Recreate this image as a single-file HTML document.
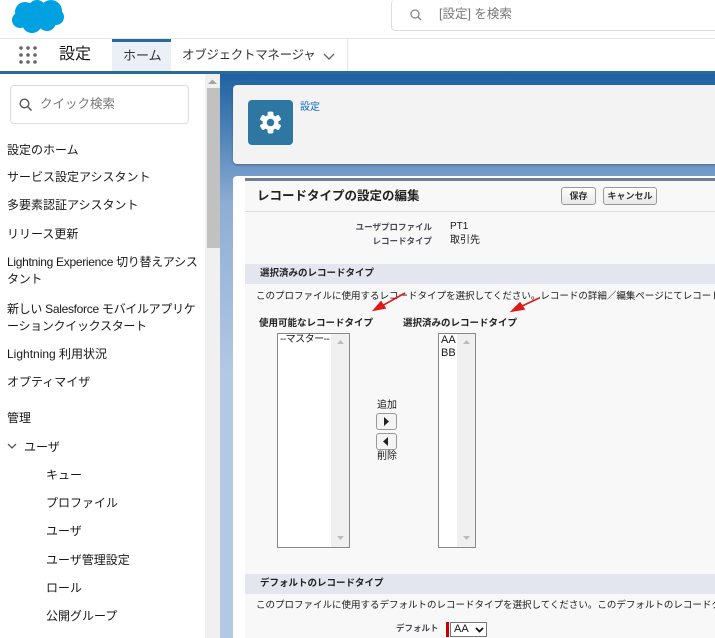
<!DOCTYPE html>
<html><head><meta charset="utf-8"><style>
*{margin:0;padding:0;box-sizing:border-box}
html,body{width:715px;height:638px;overflow:hidden}
body{position:relative;font-family:"Liberation Sans","Noto Sans CJK JP",sans-serif;color:#181818;background:#fff;line-height:1.2}
.a{position:absolute;white-space:nowrap}
.side{position:absolute;left:0;top:74px;width:205px;height:564px;overflow:hidden}
.side div{position:absolute;left:7px;font-size:12px;line-height:17px;color:#181818}
.sm{font-size:10px}
.b{font-weight:bold}
.st{font-size:9.5px;font-weight:bold;color:#222}
</style></head><body>
<!-- header -->
<svg class="a" style="left:10px;top:0" width="56" height="34" viewBox="0 0 56 34"><g fill="#00a1e0"><circle cx="15" cy="12" r="10"/><circle cx="27" cy="9" r="9"/><circle cx="41" cy="11" r="11"/><circle cx="10" cy="20" r="8"/><circle cx="22" cy="23" r="10"/><circle cx="37" cy="22" r="9"/><circle cx="46" cy="17" r="8"/></g></svg>
<div class="a" style="left:391px;top:0;width:330px;height:31px;border:1px solid #ddd;border-radius:4px;border-top:none"></div>
<svg class="a" style="left:410px;top:9px" width="12" height="12" viewBox="0 0 12 12"><circle cx="5" cy="5" r="4" fill="none" stroke="#888" stroke-width="1.3"/><path d="M8 8l3 3" stroke="#888" stroke-width="1.4"/></svg>
<div class="a" style="left:439px;top:8px;font-size:12.5px;line-height:1;color:#777">[設定] を検索</div>
<div class="a" style="left:0;top:38px;width:715px;height:1px;background:#e5e5e5"></div>
<svg class="a" style="left:19px;top:46px" width="18" height="18"><g fill="#666"><circle cx="2" cy="2" r="1.8"/><circle cx="9" cy="2" r="1.8"/><circle cx="16" cy="2" r="1.8"/><circle cx="2" cy="9" r="1.8"/><circle cx="9" cy="9" r="1.8"/><circle cx="16" cy="9" r="1.8"/><circle cx="2" cy="16" r="1.8"/><circle cx="9" cy="16" r="1.8"/><circle cx="16" cy="16" r="1.8"/></g></svg>
<div class="a" style="left:59px;top:47px;font-size:16px;line-height:1">設定</div>
<div class="a" style="left:112px;top:39px;width:59px;height:33px;background:#eaf0f5;border-top:3px solid #2a6a9b"></div>
<div class="a" style="left:123px;top:49px;font-size:13px;line-height:1;color:#333">ホーム</div>
<div class="a" style="left:182px;top:49px;font-size:12.5px;line-height:1;color:#333;letter-spacing:-0.3px">オブジェクトマネージャ</div>
<svg class="a" style="left:323px;top:53px" width="12" height="8"><path d="M1 1l5 5l5 -5" fill="none" stroke="#666" stroke-width="1.4"/></svg>
<div class="a" style="left:347px;top:39px;width:1px;height:33px;background:#e5e5e5"></div>
<div class="a" style="left:0;top:71px;width:715px;height:3px;background:#2a6a9b"></div>
<!-- sidebar -->
<div class="side">
<div style="left:10px;top:11px;width:179px;height:39px;border:1px solid #ddd;border-radius:4px"></div>
<svg style="position:absolute;left:19px;top:24px" width="13" height="13"><circle cx="5.5" cy="5.5" r="4.3" fill="none" stroke="#555" stroke-width="1.4"/><path d="M9 9l3.5 3.5" stroke="#555" stroke-width="1.5"/></svg>
<div style="left:40px;top:22px;color:#777;font-size:12.5px">クイック検索</div>
<div style="top:68px">設定のホーム</div>
<div style="top:95px">サービス設定アシスタント</div>
<div style="top:123px">多要素認証アシスタント</div>
<div style="top:152px">リリース更新</div>
<div style="top:180px;letter-spacing:-0.3px">Lightning Experience 切り替えアシス<br>タント</div>
<div style="top:227px;letter-spacing:-0.3px">新しい Salesforce モバイルアプリケ<br>ーションクイックスタート</div>
<div style="top:272px">Lightning 利用状況</div>
<div style="top:300px">オプティマイザ</div>
<div style="top:336px">管理</div>
<div style="left:24px;top:365px">ユーザ</div>
<div style="left:46px;top:393px">キュー</div>
<div style="left:46px;top:421px">プロファイル</div>
<div style="left:46px;top:449px">ユーザ</div>
<div style="left:46px;top:478px">ユーザ管理設定</div>
<div style="left:46px;top:506px">ロール</div>
<div style="left:46px;top:534px">公開グループ</div>
</div>
<svg class="a" style="left:7px;top:443px" width="10" height="8"><path d="M1 1l4 4l4 -4" fill="none" stroke="#555" stroke-width="1.3"/></svg>
<div class="a" style="left:205px;top:74px;width:15px;height:564px;background:#f0f0f0"></div>
<div class="a" style="left:207px;top:88px;width:13px;height:160px;background:#c1c1c1"></div>
<svg class="a" style="left:208px;top:79px" width="9" height="6"><path d="M0 5l4.5 -4.5l4.5 4.5z" fill="#a3a3a3"/></svg>
<!-- main bg -->
<div class="a" style="left:220px;top:74px;width:495px;height:564px;background:linear-gradient(#1f62a2 0px,#4f83b8 60px,#8fadd3 130px,#b2c8e3 300px)"></div>
<div class="a" style="left:233px;top:85px;width:490px;height:79px;background:#f3f3f3;border-radius:4px;box-shadow:0 1px 2px rgba(0,0,0,.3)"></div>
<div class="a" style="left:248px;top:100px;width:45px;height:45px;background:#2e77a3;border-radius:4px"></div>
<svg class="a" style="left:258px;top:110px" width="25" height="25" viewBox="-12 -12 24 24"><g fill="#fff"><circle r="7.5"/><rect x="-2.8" y="-10.5" width="5.6" height="5" rx="1.5"/><rect x="-2.8" y="-10.5" width="5.6" height="5" rx="1.5" transform="rotate(60)"/><rect x="-2.8" y="-10.5" width="5.6" height="5" rx="1.5" transform="rotate(120)"/><rect x="-2.8" y="-10.5" width="5.6" height="5" rx="1.5" transform="rotate(180)"/><rect x="-2.8" y="-10.5" width="5.6" height="5" rx="1.5" transform="rotate(240)"/><rect x="-2.8" y="-10.5" width="5.6" height="5" rx="1.5" transform="rotate(300)"/></g><circle r="3.6" fill="#2e77a3"/></svg>
<div class="a" style="left:300px;top:103px;font-size:10px;line-height:1;color:#0b6bc8">設定</div>
<div class="a" style="left:233px;top:176px;width:490px;height:470px;background:#fff;border-radius:4px"></div>
<div class="a" style="left:245px;top:178px;width:480px;height:470px;background:#f8f8f8;border-top:3px solid #747c95"></div>
<div class="a b" style="left:257px;top:190px;font-size:12.5px;line-height:1;color:#222">レコードタイプの設定の編集</div>
<div class="a b" style="left:561px;top:187px;width:35px;height:18px;border:1px solid #999;border-radius:3px;background:linear-gradient(#fff,#e8e8e8);text-align:center;line-height:16px;color:#333;font-size:9px">保存</div>
<div class="a b" style="left:603px;top:187px;width:54px;height:18px;border:1px solid #999;border-radius:3px;background:linear-gradient(#fff,#e8e8e8);text-align:center;line-height:16px;color:#333;font-size:9px">キャンセル</div>
<div class="a" style="left:245px;top:211px;width:480px;height:1px;background:#dbdbdb"></div>
<div class="a b" style="left:300px;top:223px;width:132px;text-align:right;font-size:8.5px;line-height:1;color:#4a4a56">ユーザプロファイル</div>
<div class="a sm" style="left:450px;top:222px;line-height:1">PT1</div>
<div class="a b" style="left:300px;top:237px;width:132px;text-align:right;font-size:8.5px;line-height:1;color:#4a4a56">レコードタイプ</div>
<div class="a sm" style="left:450px;top:236px;line-height:1">取引先</div>
<div class="a" style="left:245px;top:264px;width:480px;height:20px;background:#e3e6ee"></div>
<div class="a st" style="left:260px;top:269px;line-height:1">選択済みのレコードタイプ</div>
<div class="a" style="left:256px;top:292px;font-size:9.5px;line-height:1">このプロファイルに使用するレコードタイプを選択してください。レコードの詳細／編集ページにてレコードタイプ項目を表示させます。</div>
<div class="a st" style="left:259px;top:319px;line-height:1">使用可能なレコードタイプ</div>
<div class="a st" style="left:403px;top:319px;line-height:1">選択済みのレコードタイプ</div>
<div class="a" style="left:277px;top:333px;width:73px;height:215px;border:1px solid #888;background:#fff"><div style="position:absolute;right:0;top:0;width:18px;height:100%;background:#f0f0f0"></div><div style="position:absolute;left:2px;top:1px;font-size:10px;line-height:1;letter-spacing:-0.5px">--マスター--</div></div>
<div class="a" style="left:438px;top:333px;width:38px;height:215px;border:1px solid #888;background:#fff"><div style="position:absolute;right:0;top:0;width:18px;height:100%;background:#f0f0f0"></div><div style="position:absolute;left:2px;top:0;font-size:11px;line-height:13px">AA<br>BB</div></div>
<svg class="a" style="left:337px;top:340px" width="7" height="5"><path d="M0 4l3.5-4l3.5 4z" fill="#bbb"/></svg>
<svg class="a" style="left:463px;top:340px" width="7" height="5"><path d="M0 4l3.5-4l3.5 4z" fill="#bbb"/></svg>
<svg class="a" style="left:337px;top:536px" width="7" height="5"><path d="M0 0l3.5 4l3.5-4z" fill="#bbb"/></svg>
<svg class="a" style="left:463px;top:536px" width="7" height="5"><path d="M0 0l3.5 4l3.5-4z" fill="#bbb"/></svg>
<div class="a sm" style="left:377px;top:401px;line-height:1">追加</div>
<div class="a" style="left:376px;top:413px;width:21px;height:17px;border:1px solid #999;border-radius:3px;background:#f4f4f4"></div>
<svg class="a" style="left:384px;top:417px" width="6" height="9"><path d="M0 0l5 4.5l-5 4.5z" fill="#222"/></svg>
<div class="a" style="left:376px;top:433px;width:21px;height:17px;border:1px solid #999;border-radius:3px;background:#f4f4f4"></div>
<svg class="a" style="left:383px;top:437px" width="6" height="9"><path d="M5 0l-5 4.5l5 4.5z" fill="#222"/></svg>
<div class="a sm" style="left:377px;top:452px;line-height:1">削除</div>
<svg class="a" style="left:360px;top:285px" width="180" height="35"><g stroke="#e01818" stroke-width="1.6" fill="#e01818"><path d="M45 8L20 22"/><path d="M14 25l7-8l4 6z"/><path d="M190 8L160 22"/><path d="M152 26l8-8l4 6z"/></g></svg>
<div class="a" style="left:245px;top:574px;width:480px;height:20px;background:#e3e6ee"></div>
<div class="a st" style="left:260px;top:579px;line-height:1">デフォルトのレコードタイプ</div>
<div class="a" style="left:256px;top:601px;font-size:9.5px;line-height:1">このプロファイルに使用するデフォルトのレコードタイプを選択してください。このデフォルトのレコードタイプは、新規レコードの作成時に使用されます。</div>
<div class="a b" style="left:396px;top:624px;font-size:8.5px;line-height:1;color:#4a4a56">デフォルト</div>
<div class="a" style="left:446px;top:622px;width:3px;height:15px;background:#c00"></div>
<div class="a" style="left:450px;top:622px;width:37px;height:15px;border:1px solid #777;background:#fff;font-size:11px;line-height:13px;padding-left:3px">AA</div>
<svg class="a" style="left:475px;top:627px" width="9" height="6"><path d="M1 1l3.5 3.5l3.5-3.5" fill="none" stroke="#111" stroke-width="1.8"/></svg>
</body></html>
